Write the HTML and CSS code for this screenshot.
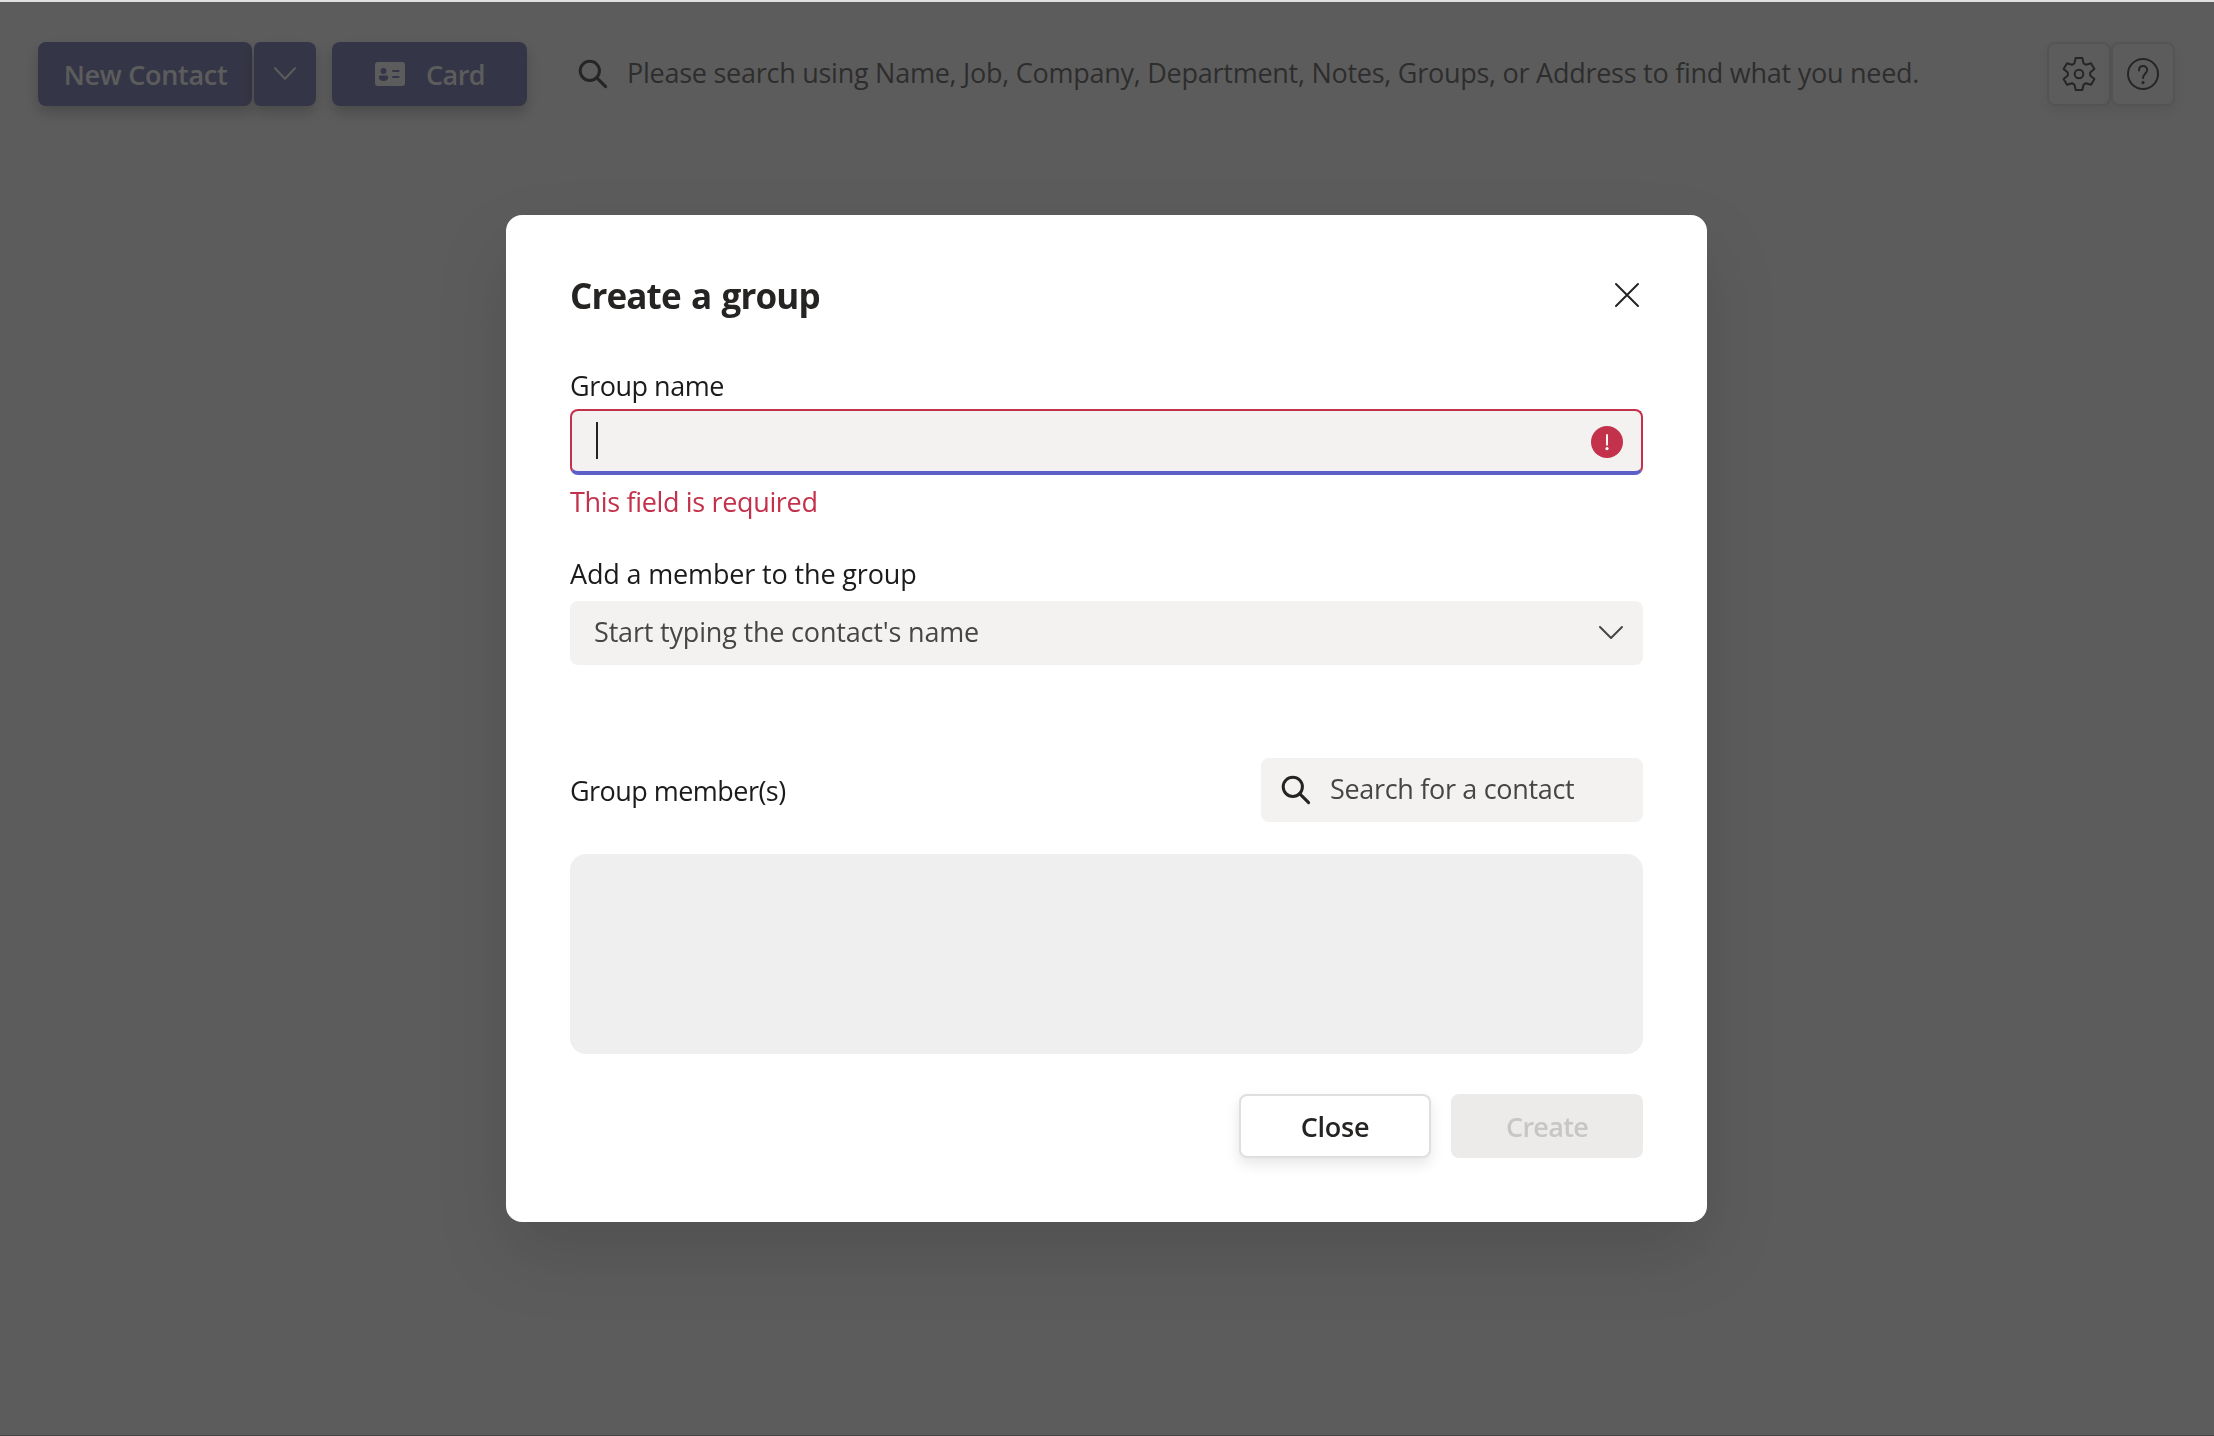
FILE: index.html
```html
<!DOCTYPE html>
<html lang="en">
<head>
<meta charset="utf-8">
<title>Contacts – Create a group</title>
<link rel="stylesheet" href="styles.css">
</head>
<body>
<div class="app">
  <header class="toolbar">
    <div class="split">
      <button class="btn btn-primary btn-new">New Contact</button>
      <button class="btn btn-primary btn-more" aria-label="More">
        <svg width="24" height="14" viewBox="0 0 24 14"><path d="M2 1.2 12 11.8 22 1.2" fill="none" stroke="currentColor" stroke-width="2" stroke-linecap="round" stroke-linejoin="round"/></svg>
      </button>
    </div>
    <button class="btn btn-primary btn-card">
      <svg width="32" height="24" viewBox="0 0 32 24">
        <rect x="1" width="30" height="24" rx="3" fill="currentColor"/>
        <g class="card-detail"><circle cx="9.5" cy="9" r="3"/><path d="M4.8 15.2q0-1.6 1.6-1.6h6.2q1.6 0 1.6 1.6 0 3.8-4.7 3.8t-4.7-3.8z"/><rect x="18" y="8" width="7.6" height="2" rx="1"/><rect x="18" y="14" width="7.6" height="2" rx="1"/></g>
      </svg>
      <span class="card-label">Card</span>
    </button>
    <div class="top-search">
      <svg class="ic" width="30" height="30" viewBox="0 0 30 30"><circle cx="11.8" cy="11.8" r="9.6" fill="none" stroke="currentColor" stroke-width="3"/><path d="m18.6 18.6 9 9" stroke="currentColor" stroke-width="3" stroke-linecap="round"/></svg>
      <span class="top-placeholder">Please search using Name, Job, Company, Department, Notes, Groups, or Address to find what you need.</span>
    </div>
    <div class="tools">
      <button class="btn btn-icon" aria-label="Settings">
        <svg width="34" height="36" viewBox="-17 -18 34 36" fill="none" stroke="currentColor" stroke-width="2" stroke-linejoin="round"><path d="M-3.3-16H3.3L4.6-10.6 7-9.2 12-10.8 15.4-5 11.2-1.5V1.5L15.4 5 12 10.8 7 9.2 4.6 10.6 3.3 16H-3.3L-4.6 10.6-7 9.2-12 10.8-15.4 5-11.2 1.5V-1.5L-15.4-5-12-10.8-7-9.2-4.6-10.6Z"/><circle r="4.3"/></svg>
      </button>
      <button class="btn btn-icon" aria-label="Help">
        <svg width="34" height="34" viewBox="-17 -17 34 34" fill="none" stroke="currentColor" stroke-width="2" stroke-linecap="round"><circle r="15"/><path d="M-4-3.6C-4-6.4-2.3-8 .1-8S4.2-6.3 4.2-4C4.2-.6 0-.4 0 4"/><circle cy="8.6" r="1.6" fill="currentColor" stroke="none"/></svg>
      </button>
    </div>
  </header>
</div>

<div class="overlay">
  <section class="dialog" role="dialog" aria-labelledby="title">
    <div class="dialog-head">
      <h1 id="title">Create a group</h1>
      <button class="dismiss" aria-label="Dismiss">
        <svg width="26" height="26" viewBox="0 0 26 26"><path d="m2 2 22 22M24 2 2 24" stroke="currentColor" stroke-width="2" stroke-linecap="round"/></svg>
      </button>
    </div>

    <div class="label label-name">Group name</div>
    <div class="field field-invalid">
      <span class="caret"></span>
      <svg class="invalid-icon" width="32" height="32" viewBox="0 0 32 32"><circle cx="16" cy="16" r="16" fill="#c4314b"/><path d="M16 9v9.8" stroke="#fff" stroke-width="1.9" stroke-linecap="round"/><circle cx="16" cy="22.6" r="1.6" fill="#fff"/></svg>
    </div>
    <div class="error">This field is required</div>

    <div class="label label-member">Add a member to the group</div>
    <div class="field field-select">
      <span class="placeholder select-placeholder">Start typing the contact's name</span>
      <svg width="26" height="16" viewBox="0 0 26 16"><path d="m2 2 11 11L24 2" fill="none" stroke="#484644" stroke-width="2" stroke-linecap="round" stroke-linejoin="round"/></svg>
    </div>

    <div class="members-head">
      <div class="label label-list">Group member(s)</div>
      <div class="field field-search">
        <svg class="ic" width="30" height="30" viewBox="0 0 30 30"><circle cx="11.8" cy="11.8" r="9.6" fill="none" stroke="currentColor" stroke-width="3"/><path d="m18.6 18.6 9 9" stroke="currentColor" stroke-width="3" stroke-linecap="round"/></svg>
        <span class="placeholder search-placeholder">Search for a contact</span>
      </div>
    </div>
    <div class="members"></div>

    <div class="actions">
      <button class="btn btn-close">Close</button>
      <button class="btn btn-create" disabled>Create</button>
    </div>
  </section>
</div>
</body>
</html>
```
FILE: styles.css
```css
* { box-sizing: border-box; }

body {
  margin: 0;
  height: 1436px;
  overflow: hidden;
  background: #fff;
  color: #252423;
  font: 27px/32px "Open Sans", "Noto Sans", sans-serif;
}

svg { display: block; flex: none; }

.app {
  height: 1436px;
  border-top: 2px solid #e1e1e1;
  border-bottom: 1px solid #a5a0a5;
}

.toolbar {
  display: flex;
  align-items: center;
  height: 64px;
  margin: 40px 39px 0 38px;
}

.btn {
  display: flex;
  align-items: center;
  justify-content: center;
  height: 64px;
  margin: 0;
  padding: 0;
  border: 0;
  border-radius: 8px;
  font: 600 27px/32px "Open Sans", "Noto Sans", sans-serif;
}

.btn-primary {
  background: #6264a7;
  color: #fff;
  box-shadow: 0 7px 14px rgba(0, 0, 0, .28);
}

.split { display: flex; gap: 2px; }
.btn-new { width: 214px; padding: 2px 0 0 1px; letter-spacing: -.3px; }
.btn-more { width: 62px; border-radius: 6px 8px 8px 6px; }
.btn-card { width: 195px; margin-left: 16px; gap: 20px; }
.card-label { padding-top: 2px; letter-spacing: -.57px; }
.card-detail { fill: #6264a7; }

.top-search {
  display: flex;
  align-items: center;
  margin-left: 51px;
  gap: 19px;
}
.ic { color: #252423; }
.top-placeholder {
  padding-bottom: 3px;
  color: #484644;
  letter-spacing: -.26px;
  white-space: nowrap;
}

.tools { display: flex; margin-left: auto; }
.btn-icon {
  width: 64px;
  border: 2px solid #e1dfdd;
  background: #fff;
  color: #252423;
  box-shadow: 0 6px 14px rgba(0, 0, 0, .1);
}

.overlay {
  position: fixed;
  inset: 2px 0 0;
  display: flex;
  justify-content: center;
  align-items: flex-start;
  padding: 213px 1px 0 0;
  background: rgba(37, 37, 37, .75);
}

.dialog {
  width: 1201px;
  height: 1007px;
  padding: 57px 64px 64px;
  border-radius: 16px;
  background: #fff;
  box-shadow: 0 32px 72px rgba(0, 0, 0, .13);
}

.dialog-head {
  display: flex;
  align-items: center;
  justify-content: space-between;
  height: 48px;
}
.dialog-head h1 {
  margin: 0;
  font-size: 35px;
  font-weight: 700;
  line-height: 48px;
  letter-spacing: -.85px;
  word-spacing: 2px;
}
.dismiss {
  padding: 0 3px 2px 0;
  border: 0;
  background: none;
  color: #252423;
}

.label { color: #1b1b1b; }
.label-name { margin: 50px 0 7px; letter-spacing: -.48px; }
.label-member { margin: 40px 0 11px; letter-spacing: -.15px; }
.label-list { padding-top: 2px; letter-spacing: -.54px; }

.field {
  display: flex;
  align-items: center;
  justify-content: space-between;
  height: 64px;
  border-radius: 8px;
  background: #f3f2f1;
}
.field-invalid {
  height: 66px;
  padding: 0 18px 0 24px;
  border: 2px solid #c4314b;
  border-bottom: 4px solid #5b5fc7;
}
.caret {
  width: 2px;
  height: 37px;
  margin-bottom: 1px;
  background: #252423;
}
.invalid-icon { margin-top: 2px; }
.error {
  margin-top: 11px;
  color: #c4314b;
  letter-spacing: -.34px;
}

.placeholder { padding-bottom: 3px; color: #484644; }
.field-select { padding: 0 19px 0 24px; }
.select-placeholder { letter-spacing: -.18px; }

.members-head {
  display: flex;
  align-items: center;
  justify-content: space-between;
  margin-top: 93px;
}
.field-search {
  justify-content: flex-start;
  width: 382px;
  padding-left: 20px;
  gap: 19px;
}
.search-placeholder { letter-spacing: -.32px; }

.members {
  height: 200px;
  margin-top: 32px;
  border-radius: 16px;
  background: #efefef;
}

.actions {
  display: flex;
  justify-content: flex-end;
  gap: 20px;
  margin-top: 40px;
}
.btn-close {
  width: 192px;
  padding-top: 2px;
  border: 2px solid #e1dfdd;
  background: #fff;
  color: #252423;
  letter-spacing: -.26px;
  box-shadow: 0 6px 14px rgba(0, 0, 0, .1);
}
.btn-create {
  width: 192px;
  padding-top: 2px;
  background: #edebe9;
  color: #c8c6c4;
  letter-spacing: -.69px;
}
```
